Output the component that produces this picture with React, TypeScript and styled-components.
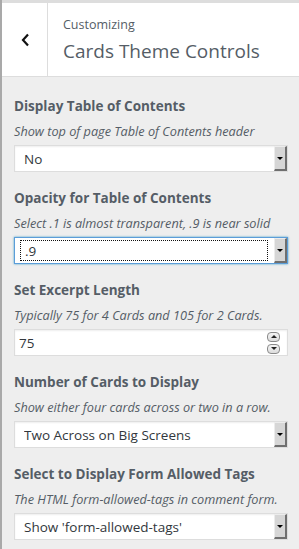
import React, { useState } from 'react';
import styled, { createGlobalStyle } from 'styled-components';

const GlobalStyle = createGlobalStyle`
  html, body {
    margin: 0;
    padding: 0;
    background: #eeeeee;
  }
  body {
    font-family: 'Open Sans', 'Noto Sans', sans-serif;
    color: #555d66;
  }
  * {
    box-sizing: border-box;
  }
`;

const Panel = styled.div`
  width: 299px;
  min-height: 549px;
  background: #eeeeee;
  border-left: 2px solid #a9a9a9;
`;

const Header = styled.div`
  display: flex;
  height: 77px;
  background: #ffffff;
  border-top: 3px solid #dddddd;
  border-bottom: 1px solid #dddddd;
`;

const BackButton = styled.button`
  width: 46px;
  flex: none;
  display: flex;
  align-items: center;
  justify-content: center;
  padding: 0 0 0 2px;
  border: none;
  border-right: 1px solid #dddddd;
  background: #ffffff;
  cursor: pointer;
`;

const HeaderText = styled.div`
  display: flex;
  flex-direction: column;
  padding: 14px 0 0 15px;
`;

const Crumb = styled.span`
  font-size: 12.5px;
  line-height: 16px;
  color: #555d66;
`;

const PanelTitle = styled.h2`
  margin: 6px 0 0;
  font-size: 19px;
  font-weight: 400;
  line-height: 24px;
  color: #555d66;
`;

const Content = styled.div`
  padding: 19px 11px 0 12px;
`;

const Control = styled.div`
  display: flex;
  flex-direction: column;
  margin-bottom: 16px;
`;

const Label = styled.label`
  font-size: 13.5px;
  font-weight: 700;
  line-height: 20px;
  color: #555d66;
`;

const Description = styled.span`
  margin-top: 5px;
  font-size: 12.7px;
  font-style: italic;
  line-height: 20px;
  color: #555d66;
  white-space: nowrap;
`;

const Field = styled.div<{ $focused?: boolean }>`
  display: flex;
  margin-top: 4px;
  height: 27px;
  background: #ffffff;
  border: 1px solid ${(p) => (p.$focused ? '#5b9dd9' : '#dddddd')};
  box-shadow: ${(p) =>
    p.$focused ? '0 0 2px rgba(30, 140, 190, 0.8)' : 'inset 0 1px 2px rgba(0, 0, 0, 0.07)'};
`;

const SelectBox = styled.select<{ $focused?: boolean }>`
  flex: 1;
  min-width: 0;
  appearance: none;
  -webkit-appearance: none;
  margin: ${(p) => (p.$focused ? '2px 6px 2px 5px' : '0')};
  padding: 0 0 0 ${(p) => (p.$focused ? 4 : 9)}px;
  border: ${(p) => (p.$focused ? '1px dotted #111111' : 'none')};
  background: transparent;
  font-family: 'Open Sans', 'Noto Sans', sans-serif;
  font-size: 13.5px;
  color: #32373c;
  outline: none;
`;

const ArrowButton = styled.span`
  width: 13px;
  flex: none;
  display: flex;
  align-items: center;
  justify-content: center;
  background: #d6d6d6;
  border-right: 2px solid #6f6f6f;
  border-bottom: 2px solid #6f6f6f;
  border-top: 1px solid #ececec;
  border-left: 1px solid #ececec;
`;

const Caret = styled.span`
  width: 0;
  height: 0;
  border-left: 3px solid transparent;
  border-right: 3px solid transparent;
  border-top: 3px solid #000000;
`;

const NumberInput = styled.input`
  flex: 1;
  min-width: 0;
  border: none;
  padding: 0 0 0 4px;
  font-family: 'Open Sans', 'Noto Sans', sans-serif;
  font-size: 13.5px;
  color: #32373c;
  background: transparent;
  outline: none;
  -moz-appearance: textfield;
  &::-webkit-inner-spin-button,
  &::-webkit-outer-spin-button {
    -webkit-appearance: none;
    margin: 0;
  }
`;

const Spinner = styled.div`
  display: flex;
  flex-direction: column;
  justify-content: center;
  gap: 2px;
  padding-right: 7px;
`;

const SpinButton = styled.button`
  width: 13px;
  height: 10px;
  padding: 0;
  display: flex;
  align-items: center;
  justify-content: center;
  border: 1px solid #8a8a8a;
  border-radius: 4px;
  background: linear-gradient(#f4f4f4, #dcdcdc);
  cursor: pointer;
`;

const SpinTri = styled.span<{ $up?: boolean }>`
  width: 0;
  height: 0;
  border-left: 3px solid transparent;
  border-right: 3px solid transparent;
  ${(p) => (p.$up ? 'border-bottom: 3px solid #222;' : 'border-top: 3px solid #222;')}
`;

type SelectProps = {
  label: string;
  description: string;
  options: string[];
  value: string;
  focused?: boolean;
};

const SelectControl = ({ label, description, options, value, focused }: SelectProps) => {
  const [val, setVal] = useState(value);
  return (
    <Control>
      <Label>{label}</Label>
      <Description>{description}</Description>
      <Field $focused={focused}>
        <SelectBox $focused={focused} value={val} onChange={(e) => setVal(e.target.value)}>
          {options.map((o) => (
            <option key={o} value={o}>
              {o}
            </option>
          ))}
        </SelectBox>
        <ArrowButton>
          <Caret />
        </ArrowButton>
      </Field>
    </Control>
  );
};

const App = () => {
  const [excerpt, setExcerpt] = useState(75);

  return (
    <>
      <GlobalStyle />
      <Panel>
        <Header>
          <BackButton aria-label="Back">
            <svg width="9" height="14" viewBox="0 0 9 14">
              <path d="M7 1.5 L2 7 L7 12.5" fill="none" stroke="#111" strokeWidth="2.2" />
            </svg>
          </BackButton>
          <HeaderText>
            <Crumb>Customizing</Crumb>
            <PanelTitle>Cards Theme Controls</PanelTitle>
          </HeaderText>
        </Header>
        <Content>
          <SelectControl
            label="Display Table of Contents"
            description="Show top of page Table of Contents header"
            options={['No', 'Yes']}
            value="No"
          />
          <SelectControl
            label="Opacity for Table of Contents"
            description="Select .1 is almost transparent, .9 is near solid"
            options={['.1', '.2', '.3', '.4', '.5', '.6', '.7', '.8', '.9']}
            value=".9"
            focused
          />
          <Control>
            <Label>Set Excerpt Length</Label>
            <Description>Typically 75 for 4 Cards and 105 for 2 Cards.</Description>
            <Field>
              <NumberInput
                type="number"
                value={excerpt}
                onChange={(e) => setExcerpt(Number(e.target.value))}
              />
              <Spinner>
                <SpinButton onClick={() => setExcerpt(excerpt + 1)}>
                  <SpinTri $up />
                </SpinButton>
                <SpinButton onClick={() => setExcerpt(excerpt - 1)}>
                  <SpinTri />
                </SpinButton>
              </Spinner>
            </Field>
          </Control>
          <SelectControl
            label="Number of Cards to Display"
            description="Show either four cards across or two in a row."
            options={['Four Across on Big Screens', 'Two Across on Big Screens']}
            value="Two Across on Big Screens"
          />
          <SelectControl
            label="Select to Display Form Allowed Tags"
            description="The HTML form-allowed-tags in comment form."
            options={["Show 'form-allowed-tags'", "Hide 'form-allowed-tags'"]}
            value="Show 'form-allowed-tags'"
          />
        </Content>
      </Panel>
    </>
  );
};

export default App;
